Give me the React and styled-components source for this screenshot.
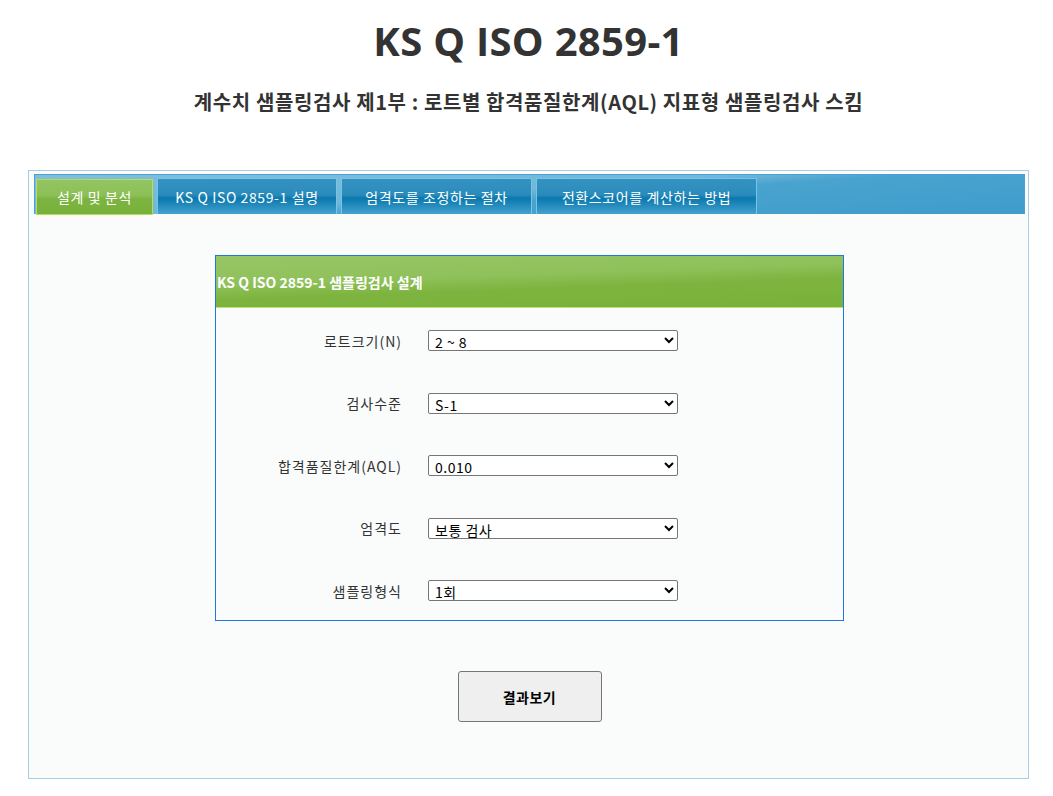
import React from "react";
import styled, { createGlobalStyle } from "styled-components";

const GlobalStyle = createGlobalStyle`
  body {
    margin: 0;
    background: #fff;
    font-family: "Noto Sans CJK KR", "Noto Sans", sans-serif;
    color: #333;
  }
`;

const tabs = [
  { text: "설계 및 분석", w: 117 },
  { text: "KS Q ISO 2859-1 설명", w: 180 },
  { text: "엄격도를 조정하는 절차", w: 191 },
  { text: "전환스코어를 계산하는 방법", w: 221 },
];

const fields = [
  { label: "로트크기(N)", options: ["2 ~ 8", "9 ~ 15", "16 ~ 25", "26 ~ 50"] },
  { label: "검사수준", options: ["S-1", "S-2", "S-3", "S-4", "I", "II", "III"] },
  { label: "합격품질한계(AQL)", options: ["0.010", "0.015", "0.025", "0.040", "0.065"] },
  { label: "엄격도", options: ["보통 검사", "까다로운 검사", "수월한 검사"] },
  { label: "샘플링형식", options: ["1회", "2회", "다회"] },
];

const App = () => {
  return (
    <Page>
      <GlobalStyle />
      <Title>KS Q ISO 2859-1</Title>
      <SubTitle>계수치 샘플링검사 제1부 : 로트별 합격품질한계(AQL) 지표형 샘플링검사 스킴</SubTitle>
      <Panel>
        <TabBar>
          {tabs.map((t, i) => (
            <Tab key={t.text} active={i === 0} w={t.w}>{t.text}</Tab>
          ))}
        </TabBar>
        <FormBox>
          <FormHead>KS Q ISO 2859-1 샘플링검사 설계</FormHead>
          <FormBody>
            {fields.map((f) => (
              <Row key={f.label}>
                <Label>{f.label}</Label>
                <Select defaultValue={f.options[0]}>
                  {f.options.map((o) => (
                    <option key={o}>{o}</option>
                  ))}
                </Select>
              </Row>
            ))}
          </FormBody>
        </FormBox>
        <ButtonWrap>
          <Button>결과보기</Button>
        </ButtonWrap>
      </Panel>
    </Page>
  );
};

const Page = styled.div`
  padding: 17px 24px 17px 28px;
`;

const Title = styled.h1`
  margin: 0;
  text-align: center;
  font-family: "Open Sans", "Noto Sans CJK KR", sans-serif;
  font-size: 40px;
  font-weight: 700;
  letter-spacing: 0.3px;
  line-height: 48px;
  color: #333;
`;

const SubTitle = styled.h2`
  margin: 23px 0 0;
  text-align: center;
  font-size: 20px;
  font-weight: 700;
  letter-spacing: 0.6px;
  line-height: 28px;
  color: #333;
`;

const Panel = styled.div`
  margin-top: 54px;
  width: 1001px;
  box-sizing: border-box;
  border: 1px solid #a9cde4;
  background: #fafcfc;
  padding: 3px 3px 56px 5px;
`;

const TabBar = styled.div`
  display: flex;
  align-items: flex-end;
  gap: 4px;
  height: 40px;
  padding-left: 1px;
  background: linear-gradient(176deg, #80bfdc 0%, #72b7d8 45%, #49a3ce 56%, #3f9ccb 100%);
  border: 1px solid #4b9fd4;
  border-bottom: none;
  box-sizing: border-box;
`;

const Tab = styled.div`
  width: ${(p) => p.w}px;
  height: 36px;
  box-sizing: border-box;
  display: flex;
  align-items: center;
  justify-content: center;
  font-size: 14px;
  letter-spacing: 0.6px;
  color: #fff;
  white-space: nowrap;
  margin-bottom: ${(p) => (p.active ? "-1px" : "0")};
  border: 1px solid ${(p) => (p.active ? "#b6dc5c" : "#74c4ec")};
  border-bottom: ${(p) => (p.active ? "1px solid #b6dc5c" : "none")};
  background: ${(p) =>
    p.active
      ? "linear-gradient(180deg, #93c462 0%, #8cc057 45%, #7db441 55%, #77b13a 100%)"
      : "linear-gradient(180deg, #3592c0 0%, #2a8cbc 45%, #0a78ae 55%, #2a8fc0 80%, #44a3cf 100%)"};
`;

const FormBox = styled.div`
  width: 627px;
  margin: 41px auto 0;
  border: 1px solid #2375e6;
`;

const FormHead = styled.div`
  height: 51px;
  display: flex;
  align-items: center;
  padding-left: 1px;
  font-size: 14px;
  font-weight: 700;
  color: #fff;
  background: linear-gradient(178deg, #98c566 0%, #8fc15a 40%, #7db43f 60%, #78b23a 100%);
  border-bottom: 1px solid #c2e07a;
`;

const FormBody = styled.div`
  padding: 22px 0 19px;
  display: flex;
  flex-direction: column;
  gap: 41.5px;
`;

const Row = styled.div`
  display: grid;
  grid-template-columns: 186px 250px;
  column-gap: 26px;
  align-items: center;
`;

const Label = styled.div`
  text-align: right;
  font-size: 14px;
  letter-spacing: 1px;
  color: #333;
`;

const Select = styled.select`
  width: 250px;
  height: 21px;
  box-sizing: border-box;
  font-family: "Noto Sans CJK KR", "Noto Sans", sans-serif;
  font-size: 14px;
  letter-spacing: 0.5px;
  color: #000;
  background: #fff;
  border: 1px solid #767676;
  border-radius: 2px;
  padding: 0 2px;
`;

const ButtonWrap = styled.div`
  display: flex;
  justify-content: center;
  margin-top: 50px;
`;

const Button = styled.button`
  width: 144px;
  height: 51px;
  background: #efefef;
  border: 1px solid #767676;
  border-radius: 3px;
  font-family: "Noto Sans CJK KR", "Noto Sans", sans-serif;
  font-size: 14px;
  font-weight: 700;
  letter-spacing: 0.5px;
  color: #000;
  cursor: pointer;
`;

export default App;
